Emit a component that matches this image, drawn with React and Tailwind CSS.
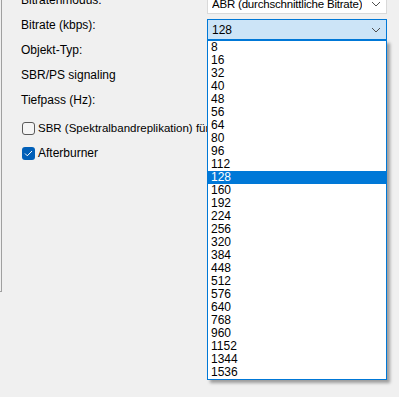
import { useState } from 'react';

const bitrates = [8, 16, 32, 40, 48, 56, 64, 80, 96, 112, 128, 160, 192, 224, 256, 320, 384, 448, 512, 576, 640, 768, 960, 1152, 1344, 1536];

function Chevron() {
  return (
    <svg width="10" height="6" viewBox="0 0 10 6" className="shrink-0">
      <polyline points="1,1 5,5 9,1" fill="none" stroke="#505050" strokeWidth="1" />
    </svg>
  );
}

function Combo({ value, active, textClass = '' }) {
  return (
    <div
      className={`flex h-[21px] w-[180px] items-center justify-between border pl-[4px] pr-[5px] ${
        active ? 'border-[#0078d7] bg-[#cce4f7]' : 'border-[#d9d9d9] bg-white'
      }`}
    >
      <span className={`min-w-0 overflow-hidden whitespace-nowrap leading-[16px] text-black ${textClass}`}>{value}</span>
      <Chevron />
    </div>
  );
}

function Label({ children }) {
  return <div className="w-[186px] shrink-0 whitespace-nowrap leading-[16px] text-black">{children}</div>;
}

function Checkbox({ checked }) {
  if (checked) {
    return (
      <div className="flex h-[13px] w-[13px] shrink-0 items-center justify-center rounded-[3px] bg-[#005fb8]">
        <svg width="9" height="7" viewBox="0 0 9 7">
          <polyline points="1,3.5 3.3,5.8 8,1" fill="none" stroke="white" strokeWidth="1" />
        </svg>
      </div>
    );
  }
  return <div className="h-[13px] w-[13px] shrink-0 rounded-[3px] border border-[#5a5a5a] bg-[#f5f5f5]" />;
}

export default function App() {
  const [selected, setSelected] = useState(128);

  return (
    <div
      className="relative h-[397px] w-[399px] overflow-hidden bg-[#f0f0f0] text-[12px] text-black"
      style={{ fontFamily: '"Liberation Sans", Arial, sans-serif' }}
    >
      <div className="flex items-start">
        <div className="h-[292px] w-[2px] shrink-0 border-b border-r border-[#a0a0a0]" />

        <div className="mt-[-8px] flex flex-col pl-[19px]">
          <div className="flex h-[25px] items-start">
            <Label>Bitratenmodus:</Label>
            <div className="mt-[1px]">
              <Combo value="ABR (durchschnittliche Bitrate)" textClass="text-[11.5px] tracking-[-0.2px]" />
            </div>
          </div>
          <div className="relative flex h-[25px] items-start">
            <Label>Bitrate (kbps):</Label>
            <div className="relative mt-[2px]">
              <Combo value={String(selected)} active />
              <div className="absolute left-0 top-[21px] z-10 w-[180px] border border-[#0078d7] bg-white shadow-[3px_3px_3px_rgba(0,0,0,0.35)]">
                {bitrates.map((b) => (
                  <div
                    key={b}
                    onClick={() => setSelected(b)}
                    className={`h-[13px] pl-[3px] leading-[13px] ${
                      b === selected ? 'bg-[#0078d7] text-white' : 'text-black'
                    }`}
                  >
                    {b}
                  </div>
                ))}
              </div>
            </div>
          </div>
          <div className="flex h-[25px] items-start">
            <Label>Objekt-Typ:</Label>
          </div>
          <div className="flex h-[25px] items-start">
            <Label>SBR/PS signaling</Label>
          </div>
          <div className="flex h-[25px] items-start">
            <Label>Tiefpass (Hz):</Label>
          </div>
          <div className="flex h-[25px] items-start gap-[3px] whitespace-nowrap pt-[5px] pl-[1px]">
            <Checkbox />
            <span className="mt-[-2px] text-[11.5px] leading-[16px]">SBR (Spektralbandreplikation) für Elemente</span>
          </div>
          <div className="flex h-[25px] items-start gap-[3px] pt-[5px] pl-[1px]">
            <Checkbox checked />
            <span className="mt-[-2px] leading-[16px]">Afterburner</span>
          </div>
        </div>
      </div>
    </div>
  );
}
